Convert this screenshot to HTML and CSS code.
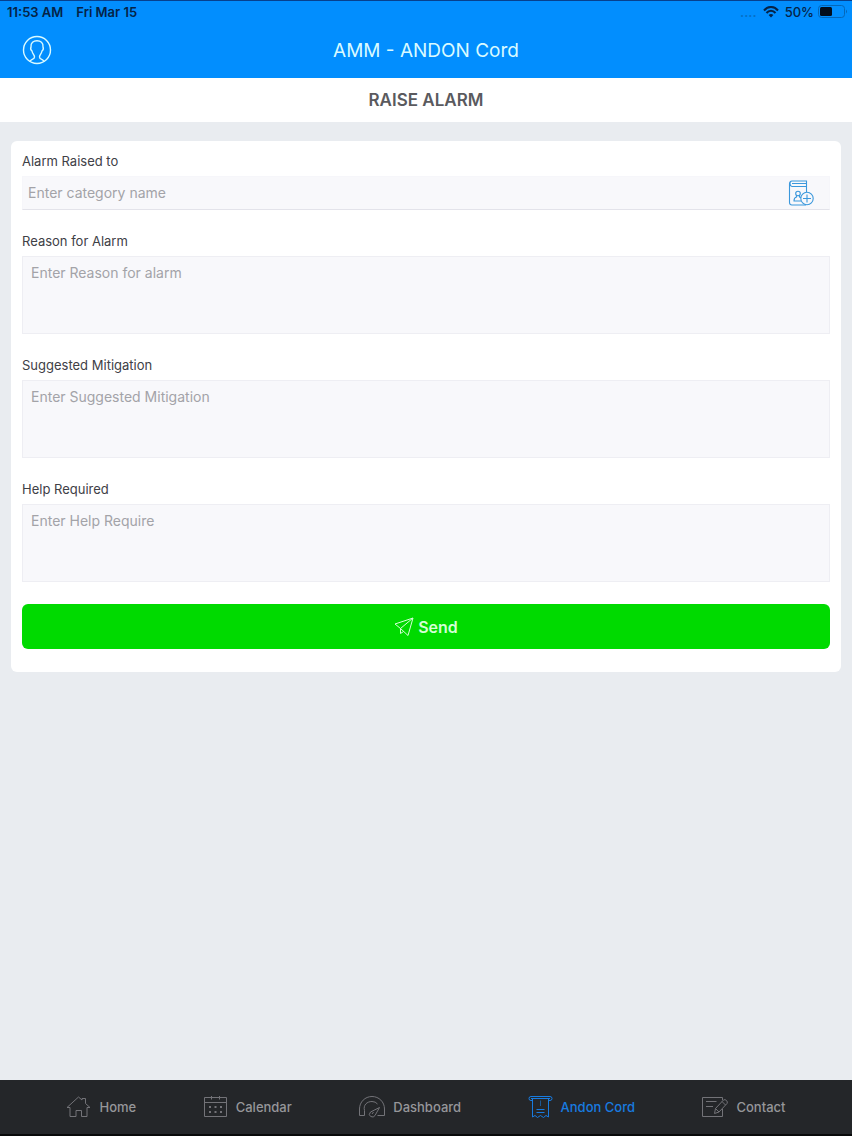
FILE: index.html
```html
<!DOCTYPE html>
<html lang="en">
<head>
<meta charset="utf-8">
<meta name="viewport" content="width=device-width, initial-scale=1">
<title>AMM - ANDON Cord</title>
<link rel="stylesheet" href="styles.css">
</head>
<body>
<div class="app">
  <div class="top">
    <div class="status">
      <span>11:53 AM</span>
      <span class="date">Fri Mar 15</span>
      <span class="signal">....</span>
      <svg class="wifi" width="16" height="12" viewBox="0 0 16 12" fill="none" stroke="currentColor" stroke-width="2"><path d="M1 4.500C5-.2 11-.2 15 4.500M3.500 7C6 4 10 4 12.500 7"/><path d="M8 11.500 5.600 9Q8 7 10.400 9Z" fill="currentColor" stroke="none"/></svg>
      <span class="percent">50%</span>
      <svg width="30" height="14" viewBox="0 0 30 14"><rect x=".5" y=".5" width="26" height="12" rx="3" fill="none" stroke="#0567b8"/><rect x="2" y="2" width="12" height="9" rx="1.500" fill="#020d1c"/><path d="M28 4.500q2 2 0 4z" fill="#0567b8"/></svg>
    </div>
    <header class="header">
      <button class="profile" type="button" aria-label="Profile">
        <svg width="30" height="30" viewBox="0 0 30 30" fill="none" stroke="currentColor" stroke-width="1.400"><circle cx="15" cy="15" r="13.500"/><path d="M7.500 26.500C9 24 12.500 24.500 12.500 22C12.500 20 10.500 19 10 16C8.300 14.500 8.500 13 9 12C8.500 7.500 11.500 5.800 15 5.800S21.500 7.500 21 12C21.500 13 21.700 14.500 20 16C19.500 19 17.500 20 17.500 22C17.500 24.500 21 24 22.500 26.500"/></svg>
      </button>
      <h1 class="title">AMM - ANDON Cord</h1>
    </header>
  </div>
  <h2 class="subtitle">RAISE ALARM</h2>
  <main class="main">
    <form class="card">
      <div class="field">
        <label for="to">Alarm Raised to</label>
        <div class="picker">
          <input id="to" type="text" placeholder="Enter category name">
          <button class="add" type="button" aria-label="Choose contact">
            <svg width="26" height="26" viewBox="0 0 26 26" fill="none" stroke="currentColor" stroke-width="1.100"><path d="M18 25H4Q1.500 25 1.500 22.500V4Q1.500 1 4 1H18.500V4.500M4 1Q2 1 2 3.500T4 6.500H18.500V12M4 3.500H18.500M18.500 4.500V6.500"/><circle cx="10" cy="13.500" r="2.300"/><path d="M8.500 15.500V17Q6 17.500 6 21H13M11.500 15.500V17L13 17.500"/><circle cx="19" cy="18.500" r="6.200"/><path d="M19 14.500V22.500M15 18.500H23"/></svg>
          </button>
        </div>
      </div>
      <div class="field">
        <label for="reason">Reason for Alarm</label>
        <textarea id="reason" placeholder="Enter Reason for alarm"></textarea>
      </div>
      <div class="field">
        <label for="mitigation">Suggested Mitigation</label>
        <textarea id="mitigation" placeholder="Enter Suggested Mitigation"></textarea>
      </div>
      <div class="field">
        <label for="help">Help Required</label>
        <textarea id="help" placeholder="Enter Help Require"></textarea>
      </div>
      <button class="send" type="submit">
        <svg width="20" height="20" viewBox="0 0 20 20" fill="none" stroke="currentColor" stroke-linejoin="round"><path d="M19 1 1 7 6.500 11.500 14 18.500ZM19 1 6.500 11.500V16.500L9.500 14.500"/></svg>
        <span>Send</span>
      </button>
    </form>
  </main>
  <nav class="tabs">
    <a href="#home" class="tab">
      <svg width="25" height="24" viewBox="0 0 25 24" fill="none" stroke="currentColor"><path d="M4 12.500H1L12.500 2 16 5V3.500H19.500V8.500L24 12.500H21V21.500H15.500V15.500H10V21.500H4Z"/></svg>
      <span>Home</span>
    </a>
    <a href="#calendar" class="tab">
      <svg width="25" height="24" viewBox="0 0 25 24" fill="none" stroke="currentColor"><path d="M1.500 2.500H23.500V21.500H1.500ZM1.500 7.500H23.500M8.500 1V4.500M16.500 1V4.500"/><path d="M6 12H19M6 17H19" stroke-width="2" stroke-dasharray="2 3.500"/></svg>
      <span>Calendar</span>
    </a>
    <a href="#dashboard" class="tab">
      <svg width="27" height="24" viewBox="0 0 27 24" fill="none" stroke="currentColor"><path d="M6.500 20.500H1.500V14C1.500 7 7 1.500 14 1.500S26.500 7 26.500 14V20.500H19.500M6.500 20.500V15.500C5 10 9 6.500 14 6.500Q17.500 6.500 19.500 9M21.500 12.500 17 20.500Q15.500 23 12.700 21.500T12.500 17ZM15.500 17 14 19"/></svg>
      <span>Dashboard</span>
    </a>
    <a href="#andon" class="tab active" aria-current="page">
      <svg width="25" height="24" viewBox="0 0 25 24" fill="none" stroke="currentColor"><path d="M4.500 5.500H3Q1 5.500 1 3.500T3 1.500H22Q24 1.500 24 3.500T22 5.500H20.500M3 3.500H22M4.500 3.500V22L7 20.500 9.500 22.500 12.500 20.500 15.500 22.500 18 20.500 20.500 22V3.500M8.500 14.500H16.500M8.500 17.500H16.500"/><path d="M12.500 5.500V11" opacity=".6"/></svg>
      <span>Andon Cord</span>
    </a>
    <a href="#contact" class="tab">
      <svg width="27" height="24" viewBox="0 0 27 24" fill="none" stroke="currentColor"><path d="M21.500 5V2.500H1.500V21.500H21.500V14M5 6.500H15.500M5 11.500H12M13.500 18.500 14.500 13.500 22.500 5Q24 4 25.500 5.500T26 8.500L18 17ZM14.500 13.500 18 17M21 6.500 24.500 10"/></svg>
      <span>Contact</span>
    </a>
  </nav>
</div>
</body>
</html>
```
FILE: styles.css
```css
* { box-sizing: border-box; }
body { margin: 0; font-family: Inter, "Liberation Sans", sans-serif; }
button, input, textarea { font: inherit; border: 0; margin: 0; padding: 0; background: none; }
svg { display: block; flex: none; }

.app { min-height: 100vh; display: flex; flex-direction: column; background: #e9ecf0; }

.top { background: #028efe; border-top: 1px solid #06408e; }
.status { display: flex; align-items: center; height: 21px; padding: 0 4px 0 7px; color: #052347; font-size: 13px; font-weight: 600; }
.date { margin-left: 13px; }
.signal { margin-left: auto; color: #0670c8; }
.wifi { margin: 0 6px; }
.percent { margin-right: 4px; font-weight: 500; }

.header { display: grid; grid-template-columns: 1fr auto 1fr; align-items: center; height: 56px; padding: 0 22px; color: #d9faff; }
.profile { justify-self: start; color: inherit; }
.title { margin: 0; font-size: 19px; font-weight: 400; }
.subtitle { margin: 0; background: #fff; color: #5a5a5e; text-align: center; font-size: 17px; font-weight: 600; line-height: 44px; }

.main { flex: 1; padding: 19px 11px; }
.card { display: flex; flex-direction: column; gap: 21px; padding: 10px 11px 23px; background: #fff; border-radius: 6px; }
.field { display: flex; flex-direction: column; gap: 5px; }
label { font-size: 13px; line-height: 20px; color: #404046; }
.picker { display: flex; align-items: center; height: 34px; background: #f8f8fb; border: 1px solid #f6f6fa; border-bottom-color: #e3e3ea; }
.picker input { flex: 1; min-width: 0; height: 100%; padding: 0 5px 2px; font-size: 14px; }
.add { padding: 0 15px 0 0; color: #3b98dc; }
textarea { display: block; height: 78px; padding: 6px 8px; resize: none; background: #f8f8fb; border: 1px solid #eeeef3; font-size: 14px; line-height: 20px; }
::placeholder { color: #a3a3a8; opacity: 1; }
.send { display: flex; align-items: center; justify-content: center; gap: 4px; height: 45px; margin-top: 1px; border-radius: 6px; background: #00da00; color: #d4ffd6; font-size: 16px; font-weight: 600; }

.tabs { display: flex; align-items: center; justify-content: space-evenly; height: 56px; background: #242629; border-bottom: 2px solid #08090a; }
.tab { display: flex; align-items: center; gap: 8px; color: #96969a; font-size: 13px; font-weight: 500; text-decoration: none; }
.tab svg { color: #737378; }
.active, .tab.active svg { color: #187be0; }
```
